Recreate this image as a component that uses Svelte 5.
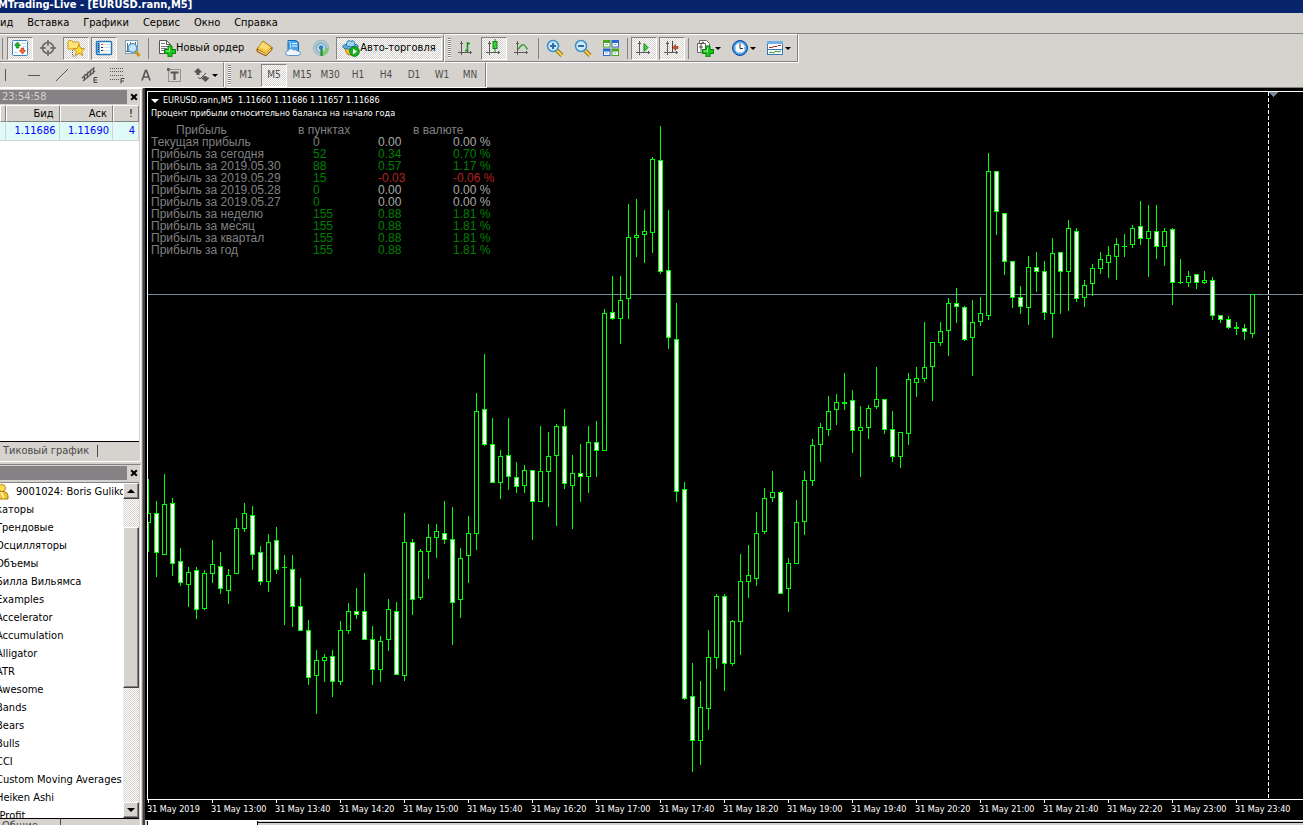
<script>
  // Each bar: high, body top, body bottom, low, kind (1 = falling, 0 = rising)
  const bars = [
    [479,513,523,552,0],[501,513,553,577,1],[474,504,555,555,0],[498,503,564,576,1],[548,561,583,586,1],
    [567,572,585,607,0],[567,570,610,619,1],[570,573,609,610,0],[540,564,574,583,0],[552,566,589,594,1],
    [569,575,591,604,0],[518,528,574,574,0],[503,513,529,532,0],[506,515,555,570,1],[546,552,582,585,1],
    [534,542,582,592,0],[527,540,570,574,1],[555,567,568,625,0],[555,569,607,627,1],[578,606,631,631,1],
    [620,630,678,685,1],[650,660,676,714,0],[654,657,661,682,0],[650,656,682,697,1],[621,630,682,685,0],
    [603,611,631,634,0],[588,611,615,619,1],[573,611,640,640,1],[626,639,670,685,1],[636,641,670,682,0],
    [599,609,640,651,0],[602,611,675,675,1],[513,542,676,681,0],[539,542,600,615,1],[549,551,598,600,0],
    [524,537,552,579,0],[524,531,538,558,0],[501,533,540,544,1],[507,539,603,645,1],[548,558,600,618,0],
    [516,533,556,583,0],[393,411,534,550,0],[354,409,445,446,1],[418,444,483,483,1],[450,456,483,499,0],
    [418,455,477,490,1],[462,477,487,493,1],[465,470,486,493,0],[470,470,502,540,1],[426,471,502,502,0],
    [432,456,472,507,0],[424,426,456,526,0],[409,426,484,489,1],[455,473,486,529,0],[444,473,477,502,1],
    [426,442,477,493,0],[421,442,451,477,1],[309,313,451,451,0],[276,312,319,320,1],[276,300,319,344,0],
    [204,237,299,319,0],[199,235,238,257,0],[210,231,235,263,0],[157,159,233,253,0],[126,160,272,274,1],
    [210,270,338,349,1],[303,339,492,502,1],[482,489,699,700,1],[663,696,741,772,1],[681,707,741,765,0],
    [630,657,709,730,0],[594,596,658,669,0],[594,596,664,691,1],[620,621,664,666,0],[554,581,622,655,0],
    [545,575,582,598,0],[512,533,579,586,0],[488,498,532,534,0],[471,492,498,502,0],[491,492,594,594,1],
    [558,563,589,612,0],[500,522,564,564,0],[471,480,522,535,0],[439,445,481,486,0],[423,427,445,462,0],
    [396,411,430,436,0],[394,402,410,425,0],[373,402,404,410,0],[390,400,431,453,1],[406,427,431,477,0],
    [405,408,428,439,0],[367,399,407,409,0],[399,399,430,434,1],[411,429,457,462,1],[432,432,457,468,0],
    [373,379,434,445,0],[367,378,383,397,0],[322,367,379,382,0],[342,342,367,401,0],[322,331,343,346,0],
    [298,303,331,356,0],[288,303,307,323,1],[306,307,340,341,1],[300,322,338,376,0],[297,313,322,326,0],
    [153,171,316,320,0],[171,171,212,235,1],[213,213,262,275,1],[261,261,298,308,1],[286,297,307,314,1],
    [256,267,308,325,0],[252,267,272,292,1],[261,271,313,320,1],[238,253,314,338,0],[252,252,272,314,1],
    [220,228,272,311,0],[228,231,299,302,1],[280,285,298,307,0],[264,268,284,296,0],[252,259,269,274,0],
    [246,255,263,278,0],[238,244,257,280,0],[234,246,247,257,0],[225,228,245,248,0],[201,226,239,245,1],
    [205,231,239,277,0],[205,231,247,259,1],[228,231,247,266,0],[228,229,283,305,1],[259,282,283,284,0],
    [271,276,283,287,0],[274,274,283,289,1],[271,280,283,284,0],[277,280,316,320,1],[315,315,320,323,1],
    [316,319,328,329,1],[322,327,329,335,0],[324,328,332,340,1],[294,294,334,338,0]
  ];

  const times = ['2019','13:00','13:40','14:20','15:00','15:40','16:20','17:00','17:40','18:20','19:00','19:40','20:20','21:00','21:40','22:20','23:00','23:40'];

  const profit = [
    ['Текущая прибыль', '0', '0.00', '0.00 %', 'n', 'z'],
    ['Прибыль за сегодня', '52', '0.34', '0.70 %', 'g', 'g'],
    ['Прибыль за 2019.05.30', '88', '0.57', '1.17 %', 'g', 'g'],
    ['Прибыль за 2019.05.29', '15', '-0.03', '-0.06 %', 'g', 'r'],
    ['Прибыль за 2019.05.28', '0', '0.00', '0.00 %', 'g', 'z'],
    ['Прибыль за 2019.05.27', '0', '0.00', '0.00 %', 'g', 'z'],
    ['Прибыль за неделю', '155', '0.88', '1.81 %', 'g', 'g'],
    ['Прибыль за месяц', '155', '0.88', '1.81 %', 'g', 'g'],
    ['Прибыль за квартал', '155', '0.88', '1.81 %', 'g', 'g'],
    ['Прибыль за год', '155', '0.88', '1.81 %', 'g', 'g']
  ];

  const menu = ['ид', 'Вставка', 'Графики', 'Сервис', 'Окно', 'Справка'];
  const tree = ['каторы', 'Трендовые', 'Осцилляторы', 'Объемы', 'Билла Вильямса', 'Examples', 'Accelerator', 'Accumulation', 'Alligator', 'ATR', 'Awesome', 'Bands', 'Bears', 'Bulls', 'CCI', 'Custom Moving Averages', 'Heiken Ashi', '-Profit'];
  const frames = ['M1', 'M5', 'M15', 'M30', 'H1', 'H4', 'D1', 'W1', 'MN'];
  let frame = $state('M5');
</script>

{#snippet axes()}
  <path d="M4.500 2v14M1 13.500h14M3 4.500h3M13.500 12v3" stroke="#5a5a5a" fill="none" />
{/snippet}

{#snippet lens(plus)}
  <path d="M10.500 11l5.500 5.500" stroke="#9a7410" stroke-width="4" />
  <path d="M10.500 11l5.500 5.500" stroke="#f7d354" stroke-width="2" />
  <circle cx="7" cy="7" r="5.500" fill="#cfe9fb" stroke="#3c8fc9" stroke-width="1.500" />
  <path d={plus ? 'M4 7h6M7 4v6' : 'M4 7h6'} stroke="#2a6ea5" stroke-width="2" />
{/snippet}

{#snippet plus()}
  <path d="M10 7h4v3.500h3.500v4h-3.500v3.500h-4v-3.500h-3.500v-4h3.500z" fill="#1fc41f" stroke="#067d06" />
  <path d="M11.500 8.500v4.500M8 12h4" stroke="#8df58d" />
{/snippet}

{#snippet icon(name)}
  <svg class="icon" width="18" height="18" viewBox="0 0 18 18" aria-hidden="true">
    {#if name === 'market'}
      <rect x="1.500" y="1.500" width="15" height="15" rx="1" fill="#fff" stroke="#3a85bd" />
      <path d="M3 4.500h3M10 4.500h5M12 7.500h3M3 13.500h4" stroke="#c5d7e5" />
      <path d="M6.500 3l3 3.500h-1.700v2.500h-2.600v-2.500h-1.700z" fill="#27b327" stroke="#0c7a12" stroke-width=".7" />
      <path d="M10.200 9h2.600v2.500h1.700l-3 3.500-3-3.500h1.700z" fill="#f06a35" stroke="#b5310b" stroke-width=".7" />
    {:else if name === 'cross'}
      <g stroke="#636363" fill="none"><circle cx="9" cy="9" r="5.500" stroke-width="1.500" /><path d="M9 1v6M9 11v6M1 9h6M11 9h6" stroke-width="1.500" /></g>
    {:else if name === 'navigator'}
      <path d="M1 3q0-1.500 1.500-1.500h2l1.500 1.500h5q1 0 1 1v6h-11z" fill="#ffe47a" stroke="#c89a1d" />
      <path d="M5.500 11v6h4" stroke="#555" stroke-dasharray="1 1" fill="none" />
      <path d="M12 5.500l1.700 3.800 4 .4-3 2.700.9 4.100-3.600-2.100-3.600 2.100.9-4.100-3-2.700 4-.4z" fill="#ffdb35" stroke="#b8860b" stroke-width=".8" />
    {:else if name === 'terminal'}
      <rect x="1.500" y="2.500" width="15" height="13" rx="1" fill="#fff" stroke="#2878b8" stroke-width="1.500" />
      <path d="M2 3.500h3v11h-3z" fill="#5aa5df" /><path d="M3.500 4v10" stroke="#173f6d" stroke-dasharray="1 1" />
      <path d="M7 5.500h8M7 8.500h8M7 11.500h8" stroke="#d5dfea" /><path d="M6 5.500h2" stroke="#d33" /><path d="M6 8.500h2M6 11.500h2" stroke="#333" />
    {:else if name === 'tester'}
      <rect x="2.500" y="1.500" width="12" height="13" fill="#fff" stroke="#7d9dbc" />
      <path d="M4.500 4v9M3 12.500h11M7.500 3v6M12.500 3v5M6 5.500h2" stroke="#5c6b78" fill="none" />
      <path d="M12 12l4.500 5" stroke="#d09312" stroke-width="3" />
      <circle cx="9.500" cy="9" r="4.300" fill="#bfe4fa" fill-opacity=".9" stroke="#4a95c9" stroke-width="1.300" />
    {:else if name === 'order'}
      <path d="M1.500 1.500h7l4 4v9h-11z" fill="#fff" stroke="#555" /><path d="M8.500 1.500v4h4" fill="none" stroke="#555" />
      <path d="M3 4.500h4M3 7.500h7M3 9.500h6M3 11.500h4" stroke="#777" />{@render plus()}
    {:else if name === 'book'}
      <path d="M7 2l9 6.500-6 6.500-9-5z" fill="#f8c843" stroke="#ad7110" /><path d="M7 3l7 5-4 3-7-3.500z" fill="#fbdc72" />
      <path d="M1 10v2.500l9 4.500 6-6.500v-2l-6 6.500z" fill="#cf8712" stroke="#95590a" /><path d="M2 11.500l8 4 5-5.500" fill="none" stroke="#fff2c0" />
    {:else if name === 'cloud'}
      <path d="M4 1.500h8l2.500 2v8h-10.500z" fill="#45a8ef" stroke="#1769b2" /><path d="M4.500 2l2 2v6" fill="none" stroke="#a8dcff" /><path d="M8 4.500h5M8 7h5" stroke="#fff" />
      <path d="M4.500 16.500q-3 0-3-2.500 0-2 2.500-2.200.5-2.300 3-2.300 1.500 0 2.500 1.500 3-1 4 1 3 0 3 2.300 0 2.200-3 2.200z" fill="#eef7ff" stroke="#5b91c9" />
    {:else if name === 'signal'}
      <g fill="none" stroke-width="1.500"><circle cx="9" cy="9" r="7.500" stroke="#9dbcc2" /><circle cx="9" cy="9" r="5" stroke="#6ab0d6" /></g>
      <path d="M9 8v9h2a8 8 0 0 0 5.500-8h-3q0 3-2.500 4z" fill="#77ca75" /><circle cx="9" cy="8.500" r="2.300" fill="#2387d0" /><path d="M9.500 10v7" stroke="#178b24" stroke-width="2" />
    {:else if name === 'auto'}
      <path d="M2 8l13-.5-1 6q-5 4-9 1.500z" fill="#efbd36" stroke="#b87b10" />
      <ellipse cx="8.500" cy="7.500" rx="8" ry="2.700" fill="#67aede" stroke="#2e78ad" /><path d="M4.500 7q-.5-5 3-5.500l1.500 1 2-1q2.500 1 2 5.500-4 1.500-8.500 0z" fill="#9bd3f4" stroke="#2e78ad" />
      <circle cx="12.500" cy="12.500" r="4.800" fill="#17b51d" stroke="#087b10" /><path d="M11 9.800l4 2.700-4 2.700z" fill="#fff" />
    {:else if name === 'barchart'}
      {@render axes()}<path d="M10.500 3v10M10.500 4.500h2.500M8 11.500h2.500" stroke="#169016" stroke-width="1.500" fill="none" />
    {:else if name === 'candles'}
      {@render axes()}<path d="M10 0v13" stroke="#138313" /><rect x="8" y="2.500" width="4" height="7" fill="#36d13b" stroke="#138313" />
    {:else if name === 'line'}
      {@render axes()}<path d="M5 10.500q4-6 6-4.500t3.500 4.500" stroke="#259b25" stroke-width="1.300" fill="none" />
    {:else if name === 'zoomin'}{@render lens(true)}
    {:else if name === 'zoomout'}{@render lens(false)}
    {:else if name === 'tiles'}
      <path d="M1 1h7.500v7.500h-7.500zM9.500 9.500h7.500v7.500h-7.500z" fill="#4ba51c" /><path d="M9.500 1h7.500v7.500h-7.500zM1 9.500h7.500v7.500h-7.500z" fill="#2a67d3" />
      <path d="M2 4h5.500v3.500h-5.500zM10.500 4h5.500v3.500h-5.500zM2 12.500h5.500v3.500h-5.500zM10.500 12.500h5.500v3.500h-5.500z" fill="#fff" />
      <path d="M3 5.500h3M11.500 5.500h3M3 14h3M11.500 14h3" stroke="#8cb8c2" />
    {:else if name === 'scroll'}
      {@render axes()}<path d="M9 4.500l4 4-4 4z" fill="#3bd33f" stroke="#11851a" />
    {:else if name === 'shift'}
      {@render axes()}<path d="M9.500 2v11" stroke="#444" /><path d="M15 7.500h-2.500v-2l-2.500 3 2.500 3v-2h2.500z" fill="#d34a27" stroke="#8b240e" stroke-width=".6" />
    {:else if name === 'indicators'}
      <path d="M3.500 1.500h7l3 3v8h-10z" fill="#fff" stroke="#666" /><path d="M1.500 4.500h8v9h-8z" fill="#fff" stroke="#666" />
      <path d="M8 3.500q-3-1-3 3v6M3 8h4" stroke="#444" fill="none" />{@render plus()}
    {:else if name === 'clock'}
      <circle cx="9" cy="9" r="7.500" fill="#2f8de2" stroke="#124e9d" /><circle cx="9" cy="9" r="5.300" fill="#f7fbff" stroke="#9cc9ee" />
      <path d="M9 5v4.500h3" stroke="#333" fill="none" /><path d="M9 4v1M9 13v1M4 9h1M13 9h1" stroke="#777" />
    {:else if name === 'template'}
      <rect x="1.500" y="2.500" width="15" height="13" fill="#fff" stroke="#3978b5" /><path d="M1 2h16v3h-16z" fill="#6eb1e6" />
      <path d="M3 8.500h3l2-1h3l1-1h3" stroke="#9d2e25" fill="none" /><path d="M2 10.500h14" stroke="#3978b5" /><path d="M3 14l2-1 2 1 3-2 2 1 3-1" stroke="#299129" fill="none" />
    {:else if name === 'vline'}<path d="M8.500 3v12" stroke="#555" />
    {:else if name === 'hline'}<path d="M3 9.500h12" stroke="#555" />
    {:else if name === 'trend'}<path d="M3 15l12-12" stroke="#555" />
    {:else if name === 'channel'}
      <path d="M1 12l12-10M2 15l12-10M4 8l-1 6M7 5.500l-1 7M10 3.500l-1 6M13 1l-1 7" stroke="#555" stroke-width="1.200" fill="none" /><path d="M16.500 11.500h-3.500v5h3.500M13 14h3" stroke="#444" fill="none" />
    {:else if name === 'fibo'}
      <path d="M1 2.500h14M1 5.500h14M1 9.500h14M1 13.500h9" stroke="#555" stroke-dasharray="1 1" /><path d="M15.500 12.500h-3.500v5M12 15h3" stroke="#444" fill="none" />
    {:else if name === 'text'}<path d="M5 14.500l3.500-10h1l3.500 10M6.500 11h5" stroke="#5a5a5a" stroke-width="1.700" fill="none" />
    {:else if name === 'label'}
      <rect x="3.500" y="3.500" width="12" height="12" fill="none" stroke="#555" stroke-dasharray="1 1" /><path d="M2 2h3v3h-3z" fill="#666" /><path d="M5.500 6.500h8M9.500 6v8" stroke="#555" stroke-width="2" />
    {:else if name === 'arrows'}
      <path d="M1 6l4-4 4 4-2.500 1v2h-3v-2zM8 12l2.500-1v-1h3v1l3 1-4 4z" fill="#555" /><path d="M5 11l2 2 6-6" stroke="#555" fill="none" />
    {:else if name === 'user'}
      <circle cx="7" cy="5" r="3.500" fill="#ffdc54" stroke="#b98a13" /><path d="M1 16q-1-8 5-7.500 8-1 7 7.500z" fill="#f4c32f" stroke="#a97b0c" /><path d="M6 9l3 6" stroke="#fff0a8" stroke-width="2" />
    {/if}
  </svg>
{/snippet}

{#snippet tool(name, label, on = false)}
  <button class="tool" class:on aria-label={label}>{@render icon(name)}</button>
{/snippet}
{#snippet drop(name, label)}
  <button class="tool drop" aria-label={label}>{@render icon(name)}<i class="caret"></i></button>
{/snippet}

<div class="app">
  <header class="title">MTrading-Live - [EURUSD.rann,M5]</header>
  <nav class="menu">
    {#each menu as m}<button>{m}</button>{/each}
  </nav>

  <div class="bar">
    <div class="group">
      <i class="sep first"></i>
      {@render tool('market', 'Обзор рынка', true)}
      {@render tool('cross', 'Окно данных')}
      {@render tool('navigator', 'Навигатор', true)}
      {@render tool('terminal', 'Терминал', true)}
      {@render tool('tester', 'Тестер стратегий')}
      <i class="sep"></i>
      <button class="tool wide">{@render icon('order')}Новый ордер</button>
      {@render tool('book', 'Редактор')}
      {@render tool('cloud', 'Хостинг')}
      {@render tool('signal', 'Сигналы')}
      <button class="tool wide on">{@render icon('auto')}Авто-торговля</button>
    </div>
    <div class="group">
      <i class="grip"></i>
      {@render tool('barchart', 'Бары')}
      {@render tool('candles', 'Свечи', true)}
      {@render tool('line', 'Линия')}
      <i class="sep"></i>
      {@render tool('zoomin', 'Увеличить')}
      {@render tool('zoomout', 'Уменьшить')}
      {@render tool('tiles', 'Окна мозаикой')}
      <i class="sep"></i>
      {@render tool('scroll', 'Автопрокрутка', true)}
      {@render tool('shift', 'Сдвиг графика', true)}
      <i class="sep"></i>
      {@render drop('indicators', 'Индикаторы')}
      {@render drop('clock', 'Периоды')}
      {@render drop('template', 'Шаблоны')}
    </div>
  </div>

  <div class="bar second">
    <div class="group drawing">
      {@render tool('vline', 'Вертикальная линия')}
      {@render tool('hline', 'Горизонтальная линия')}
      {@render tool('trend', 'Трендовая линия')}
      {@render tool('channel', 'Канал')}
      {@render tool('fibo', 'Фибоначчи')}
      {@render tool('text', 'Текст')}
      {@render tool('label', 'Метка')}
      {@render drop('arrows', 'Стрелки')}
    </div>
    <div class="group">
      <i class="grip"></i>
      {#each frames as f}
        <button class="tool frame" class:on={f === frame} onclick={() => (frame = f)}>{f}</button>
      {/each}
    </div>
  </div>

  <main>
    <aside>
      <section class="market">
        <div class="head"><span>23:54:58</span><button class="close" aria-label="Закрыть"></button></div>
        <table class="quotes">
          <thead><tr><th class="sym"></th><th>Бид</th><th>Аск</th><th class="spr">!</th></tr></thead>
          <tbody><tr><td></td><td>1.11686</td><td>1.11690</td><td>4</td></tr></tbody>
        </table>
        <div class="blank"></div>
        <div class="tabs">Тиковый график<i></i></div>
      </section>
      <section class="nav">
        <div class="head"><span></span><button class="close" aria-label="Закрыть"></button></div>
        <div class="treebox">
          <ul>
            <li class="account">{@render icon('user')}9001024: Boris Gulikov</li>
            {#each tree as t}<li>{t}</li>{/each}
          </ul>
          <div class="scroll">
            <button aria-label="Вверх"><i class="up"></i></button>
            <div class="thumb"></div>
            <button aria-label="Вниз"><i class="caret"></i></button>
          </div>
        </div>
        <div class="tabs low">Общие<i></i></div>
      </section>
    </aside>

    <div class="work">
      <div class="chart">
        <svg class="plot" width="100%" height="100%" shape-rendering="crispEdges" aria-label="EURUSD M5">
          <path d="M1120.500 0v708" stroke="#fff" stroke-dasharray="4 2" />
          <rect x="0" y="202" width="100%" height="1" fill="#778899" />
          <path d="M1120 0h10l-5 5z" fill="#778899" />
          <g transform="translate(0 -92)">
            {#each bars as [h, t, b, l, down], i}
              <rect x={i * 8} y={h} width="1" height={l - h} fill="#0f0" />
              <rect x={i * 8 - 2} y={t} width="5" height={b - t} fill="#0f0" />
              {#if b - t > 2}
                <rect x={i * 8 - 1} y={t + 1} width="3" height={b - t - 2} fill={down ? '#fff' : '#000'} />
              {/if}
            {/each}
          </g>
        </svg>
        <div class="info">
          <p><i class="caret"></i>EURUSD.rann,M5&nbsp; 1.11660 1.11686 1.11657 1.11686</p>
          <p>Процент прибыли относительно баланса на начало года</p>
          <table class="profit">
            <colgroup><col class="c1" /><col class="c2" /><col class="c3" /><col /></colgroup>
            <thead><tr><th>Прибыль</th><th>в пунктах</th><th colspan="2">в валюте</th></tr></thead>
            <tbody>
              {#each profit as [name, pts, cur, pct, c1, c2]}
                <tr><td>{name}</td><td class={c1}>{pts}</td><td class={c2}>{cur}</td><td class={c2}>{pct}</td></tr>
              {/each}
            </tbody>
          </table>
        </div>
      </div>
      <div class="axis">
        {#each times as t}<span>31 May {t}</span>{/each}
      </div>
      <div class="charttabs"><i></i></div>
    </div>
  </main>
</div>

<style>
  :global(body) { margin: 0; overflow: hidden; }
  .app {
    --face: #d6d3ce; --shade: #848284;
    height: 100vh; display: flex; flex-direction: column; overflow: hidden;
    background: var(--face); color: #000;
    font: 11px/14px "DejaVu Sans Condensed", "DejaVu Sans", Tahoma, sans-serif;
  }
  button { font: inherit; color: inherit; background: none; border: 0; padding: 0; }
  .title { height: 13px; line-height: 10px; background: #08246b; color: #fff; font-weight: bold; white-space: nowrap; text-indent: -2px; flex: none; }
  .menu { height: 21px; display: flex; gap: 14px; align-items: center; border-bottom: 1px solid var(--shade); box-sizing: border-box; flex: none; }
  .bar { display: flex; height: 28px; flex: none; box-sizing: border-box; }
  .bar.second { height: 26px; border-bottom: 1px solid var(--shade); }
  .group {
    display: flex; align-items: center; gap: 2px; padding-right: 1px; box-sizing: border-box;
    border-top: 1px solid #fff; border-bottom: 1px solid var(--shade); border-right: 1px solid var(--shade);
    box-shadow: 1px 1px 0 #fff;
  }
  .group + .group { margin-left: 1px; padding: 0 2px 0 3px; }
  .second .group { border-top-color: transparent; border-bottom: 0; }
  .drawing { margin-left: -7px; }
  .tool { width: 26px; height: 23px; display: flex; align-items: center; justify-content: center; border: 1px solid transparent; box-sizing: border-box; flex: none; }
  .tool.on {
    border-color: var(--shade) #fff #fff var(--shade);
    background: repeating-conic-gradient(#fff 0 25%, var(--face) 0 50%) 0 0 / 2px 2px;
  }
  .wide { width: auto; padding: 0 5px; white-space: nowrap; }
  .drop { width: 33px; gap: 1px; }
  .frame { color: #4a4a4a; font-size: 10px; }
  .icon { display: block; flex: none; }
  .caret { width: 0; height: 0; border: 3px solid transparent; border-top-color: currentColor; border-bottom: 0; flex: none; }
  .up { width: 0; height: 0; border: 4px solid transparent; border-bottom-color: #000; border-top: 0; }
  .sep { width: 1px; height: 21px; margin: 0 1px; background: var(--shade); }
  .sep.first { margin: 0 2px; }
  .grip { width: 3px; height: 20px; background: repeating-linear-gradient(var(--shade) 0 1px, #fff 1px 2px); }

  main { flex: 1; display: flex; min-height: 0; }
  aside { width: 143px; flex: none; display: flex; flex-direction: column; border-right: 1px solid var(--shade); box-sizing: border-box; padding-top: 1px; border-top: 1px solid #fff; }
  section { padding-right: 1px; display: flex; flex-direction: column; min-height: 0; border-right: 1px solid #fff; margin-right: 1px; }
  .market { flex: 370 1 0; border-bottom: 1px solid #fff; }
  .nav { flex: 359 1 0; border-top: 1px solid var(--shade); padding-top: 1px; margin-top: 2px; }
  .head { height: 14px; display: flex; flex: none; margin-bottom: 1px; }
  .nav .head { margin-bottom: 2px; }
  .head span { flex: 1; background: var(--shade); color: var(--face); padding-left: 2px; }
  .close { width: 12px; position: relative; }
  .close::before, .close::after { content: ""; position: absolute; left: 3px; top: 6px; width: 8px; height: 2px; background: #000; transform: rotate(45deg); }
  .close::after { transform: rotate(-45deg); }
  .quotes { width: 100%; border-collapse: separate; border-spacing: 0; table-layout: fixed; text-align: right; flex: none; }
  .quotes th { font-weight: normal; height: 17px; padding: 0 5px 0 0; border: 1px solid; border-color: #fff var(--shade) var(--shade) #fff; box-sizing: border-box; line-height: 15px; }
  .quotes td { height: 18px; padding: 0 3px 0 0; color: #00f; background: #dffbf7; border-right: 1px solid #d6d3ce; border-bottom: 1px solid #d6d3ce; }
  .quotes .sym { width: 6px; padding: 0; }
  .quotes .spr { width: 26px; }
  .blank { flex: 1; background: #fff; border-bottom: 1px solid #000; }
  .tabs { height: 19px; display: flex; align-items: center; gap: 8px; padding-left: 3px; color: #4a4a4a; flex: none; white-space: nowrap; overflow: hidden; }
  .tabs i { width: 1px; height: 12px; background: #4a4a4a; }
  .tabs.low { height: 6px; align-items: flex-start; padding-left: 2px; gap: 22px; }
  .treebox { flex: 1; display: flex; min-height: 0; background: #fff; border-top: 1px solid var(--shade); border-bottom: 1px solid #000; }
  ul { flex: 1; min-width: 0; list-style: none; margin: 0; padding: 0; overflow: hidden; }
  li { height: 18px; line-height: 18px; white-space: nowrap; text-indent: -4px; }
  .account { display: flex; text-indent: 0; margin-left: -5px; gap: 3px; }
  .scroll { width: 16px; flex: none; display: flex; flex-direction: column; background: repeating-conic-gradient(#fff 0 25%, var(--face) 0 50%) 0 0 / 2px 2px; }
  .scroll button, .thumb { background: var(--face); border: 1px solid; border-color: #fff #424142 #424142 #fff; box-shadow: inset -1px -1px 0 var(--shade); box-sizing: border-box; }
  .scroll button { height: 16px; flex: none; display: flex; align-items: center; justify-content: center; }
  .scroll .caret { border-width: 4px 4px 0; }
  .thumb { flex: 0 1 48%; margin-top: 28px; }
  .scroll button:last-child { margin-top: auto; }

  .work { flex: 1; min-width: 0; display: flex; flex-direction: column; border-left: 2px solid #424142; background: #000; }
  .chart { flex: 1; min-height: 0; margin: 3px 0 0 2px; border: solid #fff; border-width: 1px 0 1px 1px; position: relative; overflow: hidden; }
  .plot { display: block; position: absolute; inset: 0; }
  .info { position: absolute; left: 3px; top: 2px; color: #fff; font-size: 9px; }
  .info p { margin: 0; height: 13px; line-height: 13px; display: flex; align-items: center; gap: 4px; white-space: nowrap; }
  .info .caret { border-width: 4px 4px 0; }
  .profit { border-collapse: collapse; margin-top: 4px; table-layout: fixed; width: 350px; font: 12px/12px "Liberation Sans", Arial, sans-serif; color: #808080; white-space: nowrap; }
  .profit th, .profit td { padding: 0; font-weight: normal; text-align: left; height: 12px; }
  .c1 { width: 147px; }
  .c2 { width: 80px; }
  .c3 { width: 75px; }
  .profit th:nth-child(1) { padding-left: 25px; }
  .profit th:nth-child(3) { padding-left: 35px; }
  .profit td:nth-child(2) { padding-left: 15px; }
  .g { color: #008000; }
  .r { color: #b22222; }
  .z { color: #a9a9a9; }
  .axis { height: 20px; flex: none; display: flex; overflow: hidden; margin-left: 2px; color: #fff; font-size: 9px; }
  .axis span { width: 64px; flex: none; line-height: 18px; white-space: nowrap; background: linear-gradient(#fff, #fff) 1px 0 / 1px 3px no-repeat; }
  .charttabs { height: 5px; flex: none; background: var(--face); border-top: 1px solid #fff; box-sizing: border-box; display: flex; }
  .charttabs i { width: 109px; margin-left: 2px; background: #fff; border: 1px solid #000; border-width: 0 1px; }
  .charttabs::after { content: ""; flex: 1; border-top: 1px solid #000; margin-top: 1px; }
</style>
